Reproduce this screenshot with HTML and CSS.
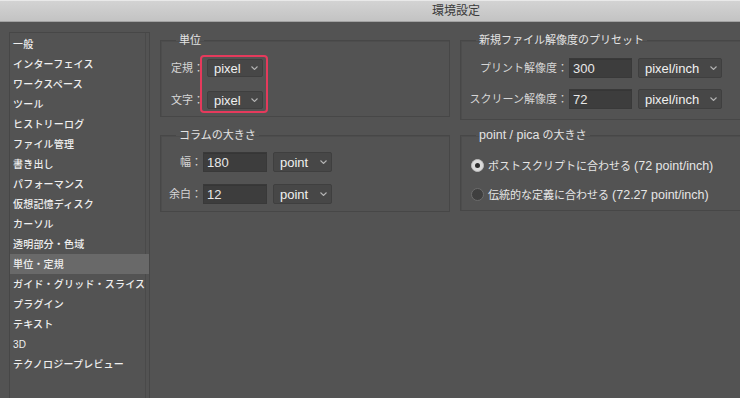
FILE: index.html
```html
<!DOCTYPE html>
<html lang="ja">
<head>
    <meta charset="UTF-8">
    <meta name="viewport" content="width=device-width, initial-scale=1.0">
    <title>環境設定</title>
    <link rel="stylesheet" href="styles.css">
</head>
<body>
    <div class="window">
        <div class="titlebar">環境設定</div>

        <div class="main">
            <ul class="sidebar">
                <li>一般</li>
                <li>インターフェイス</li>
                <li>ワークスペース</li>
                <li>ツール</li>
                <li>ヒストリーログ</li>
                <li>ファイル管理</li>
                <li>書き出し</li>
                <li>パフォーマンス</li>
                <li>仮想記憶ディスク</li>
                <li>カーソル</li>
                <li>透明部分・色域</li>
                <li class="active">単位・定規</li>
                <li>ガイド・グリッド・スライス</li>
                <li>プラグイン</li>
                <li>テキスト</li>
                <li>3D</li>
                <li>テクノロジープレビュー</li>
            </ul>

            <div class="content">
                <fieldset class="box box-left">
                    <legend>単位</legend>
                    <div class="unit-body">
                        <div class="unit-labels">
                            <span>定規：</span>
                            <span>文字：</span>
                        </div>
                        <div class="ring">
                            <div class="select sel-unit"><span>pixel</span><svg width="7" height="4" viewBox="0 0 7 4"><polyline points="0.5,0.5 3.5,3.5 6.5,0.5" /></svg></div>
                            <div class="select sel-unit"><span>pixel</span><svg width="7" height="4" viewBox="0 0 7 4"><polyline points="0.5,0.5 3.5,3.5 6.5,0.5" /></svg></div>
                        </div>
                    </div>
                </fieldset>

                <fieldset class="box box-right">
                    <legend>新規ファイル解像度のプリセット</legend>
                    <div class="res-body">
                        <div class="row">
                            <span class="lbl lbl-res">プリント解像度：</span>
                            <input class="field field-res" type="text" value="300">
                            <div class="select sel-res"><span>pixel/inch</span><svg width="7" height="4" viewBox="0 0 7 4"><polyline points="0.5,0.5 3.5,3.5 6.5,0.5" /></svg></div>
                        </div>
                        <div class="row">
                            <span class="lbl lbl-res">スクリーン解像度：</span>
                            <input class="field field-res" type="text" value="72">
                            <div class="select sel-res"><span>pixel/inch</span><svg width="7" height="4" viewBox="0 0 7 4"><polyline points="0.5,0.5 3.5,3.5 6.5,0.5" /></svg></div>
                        </div>
                    </div>
                </fieldset>

                <fieldset class="box box-left">
                    <legend>コラムの大きさ</legend>
                    <div class="col-body">
                        <div class="row">
                            <span class="lbl lbl-col">幅：</span>
                            <input class="field field-col" type="text" value="180">
                            <div class="select sel-col"><span>point</span><svg width="7" height="4" viewBox="0 0 7 4"><polyline points="0.5,0.5 3.5,3.5 6.5,0.5" /></svg></div>
                        </div>
                        <div class="row">
                            <span class="lbl lbl-col">余白：</span>
                            <input class="field field-col" type="text" value="12">
                            <div class="select sel-col"><span>point</span><svg width="7" height="4" viewBox="0 0 7 4"><polyline points="0.5,0.5 3.5,3.5 6.5,0.5" /></svg></div>
                        </div>
                    </div>
                </fieldset>

                <fieldset class="box box-right">
                    <legend><span class="en">point / pica</span> の大きさ</legend>
                    <div class="radio-body">
                        <label class="radio-row">
                            <span class="radio on"></span>
                            <span>ポストスクリプトに合わせる <span class="en">(72 point/inch)</span></span>
                        </label>
                        <label class="radio-row">
                            <span class="radio"></span>
                            <span>伝統的な定義に合わせる <span class="en">(72.27 point/inch)</span></span>
                        </label>
                    </div>
                </fieldset>
            </div>
        </div>
    </div>
</body>
</html>
```

FILE: styles.css
```css
*{
    box-sizing: border-box;
}
body{
    margin: 0;
    background-color: #535353;
    font-family: "Liberation Sans", "Noto Sans CJK JP", sans-serif;
    color: #d8d8d8;
}
.window{
    width: 740px;
    height: 398px;
    overflow: hidden;
}
.titlebar{
    height: 22px;
    padding-left: 172px;
    background: linear-gradient(#d3d3d3, #c3c3c3);
    border-top: 1px solid #e9e9e9;
    border-bottom: 1px solid #a2a2a2;
    text-align: center;
    font-size: 12px;
    line-height: 20px;
    color: #3b3b3b;
}
.main{
    display: flex;
    align-items: flex-start;
    padding: 10px 0 0 9px;
}
.sidebar{
    list-style: none;
    margin: 0;
    padding: 1px 0 0 0;
    width: 141px;
    height: 366px;
    border: 1px solid #474747;
    border-bottom: none;
    box-shadow: inset -3px 0 0 #535353, inset -4px 0 0 #4a4a4a;
}
.sidebar li{
    height: 20px;
    line-height: 21px;
    padding-left: 3px;
    font-size: 10px;
    font-weight: 500;
    letter-spacing: 0.2px;
    color: #efefef;
    white-space: nowrap;
}
.sidebar li.active{
    background-color: #696969;
}
.content{
    flex: 1;
    display: grid;
    grid-template-columns: 290px 1fr;
    column-gap: 10px;
    row-gap: 8px;
    align-items: start;
    align-content: start;
    margin-left: 10px;
    padding-top: 1px;
}
.box{
    margin: 0;
    padding: 0;
    min-width: 0;
    border: 1px solid #474747;
    box-shadow: inset 1px 1px 0 #4d4d4d;
}
.box-right{
    border-right: none;
}
.box legend{
    margin-left: 15px;
    padding: 0 3px;
    font-size: 11px;
    line-height: 14px;
    color: #e4e4e4;
}
.box legend .en{
    font-size: 12.5px;
}
.unit-body{
    display: flex;
    padding: 8px 0 3px 10px;
}
.unit-labels{
    display: flex;
    flex-direction: column;
    gap: 14px;
    padding-top: 4px;
    width: 29px;
    white-space: nowrap;
}
.unit-labels span, .lbl{
    height: 18px;
    line-height: 18px;
    font-size: 11px;
    color: #d6d6d6;
}
.ring{
    display: flex;
    flex-direction: column;
    gap: 14px;
    padding: 2px 3px 2px 5px;
    border: 2px solid #e53a5c;
    border-radius: 4px;
}
.select{
    display: flex;
    align-items: center;
    justify-content: space-between;
    padding: 0 4px 0 6px;
    height: 20px;
    background-color: #474747;
    border: 1px solid #3f3f3f;
    border-radius: 2px;
    font-size: 13px;
    color: #f0f0f0;
}
.select svg polyline{
    fill: none;
    stroke: #b4b4b4;
    stroke-width: 1.1;
}
.sel-unit{
    width: 56px;
    height: 18px;
}
.sel-col{
    width: 59px;
    margin-left: 6px;
}
.sel-res{
    width: 84px;
    margin-left: 6px;
}
.row{
    display: flex;
    align-items: center;
}
.lbl{
    text-align: right;
    white-space: nowrap;
    height: 20px;
    line-height: 20px;
}
.lbl-col{
    width: 35px;
}
.lbl-res{
    width: 99px;
}
.field{
    height: 20px;
    margin: 0 0 0 1px;
    padding: 0 3px;
    background-color: #3d3d3d;
    border: 1px solid #393939;
    box-shadow: inset 0 1px 0 #363636;
    font-family: "Liberation Sans", sans-serif;
    font-size: 13px;
    color: #e8e8e8;
    outline: none;
}
.field-col{
    width: 64px;
}
.field-res{
    width: 63px;
}
.col-body{
    display: flex;
    flex-direction: column;
    gap: 12px;
    padding: 10px 0 7px 6px;
}
.res-body{
    display: flex;
    flex-direction: column;
    gap: 11px;
    padding: 11px 0 10px 8px;
}
.radio-body{
    display: flex;
    flex-direction: column;
    gap: 11px;
    padding: 14px 0 7px 10px;
}
.radio-row{
    display: flex;
    align-items: center;
    gap: 4px;
    height: 18px;
    font-size: 11px;
    color: #e6e6e6;
    white-space: nowrap;
}
.radio-row .en{
    font-size: 12.5px;
}
.radio{
    position: relative;
    width: 13px;
    height: 13px;
    border-radius: 50%;
    background-color: #3f3f3f;
    border: 1px solid #6c6c6c;
}
.radio.on{
    background-color: #dadada;
    border-color: #bdbdbd;
}
.radio.on::after{
    content: "";
    position: absolute;
    left: 3px;
    top: 3px;
    width: 5px;
    height: 5px;
    border-radius: 50%;
    background-color: #2c2c2c;
}
```
